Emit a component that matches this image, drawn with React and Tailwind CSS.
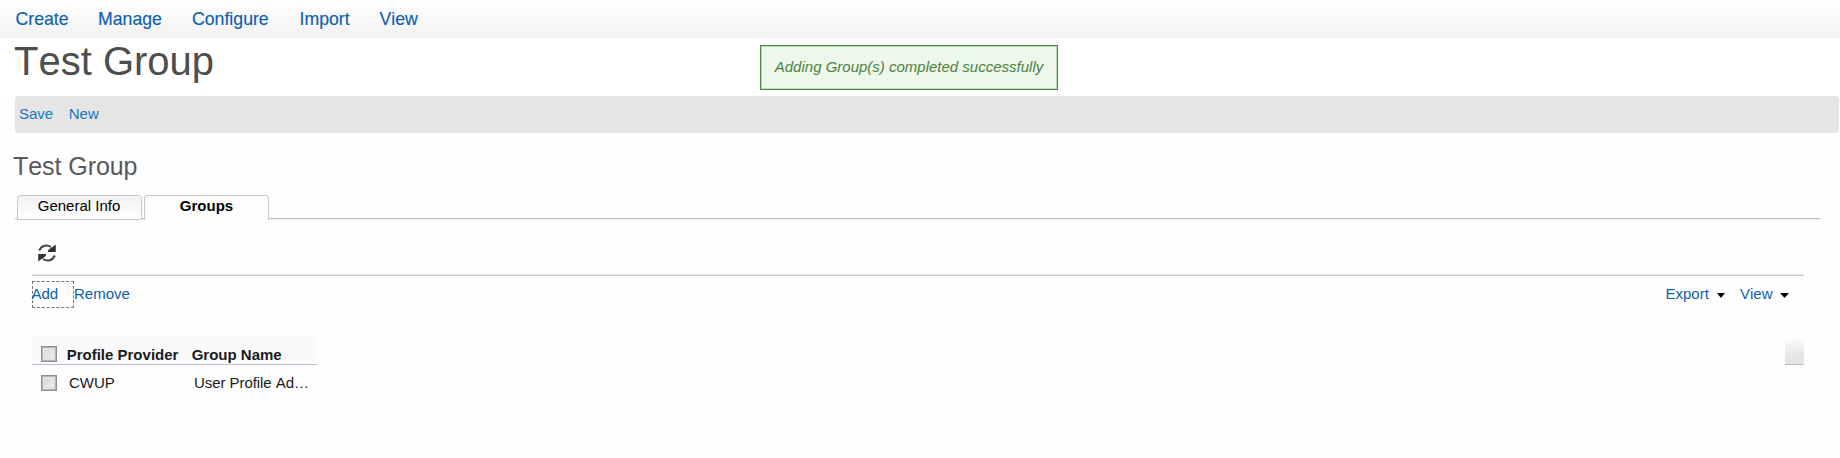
const NAV = [
  ['Create', 'w-[82.5px]'],
  ['Manage', 'w-[94px]'],
  ['Configure', 'w-[107.5px]'],
  ['Import', 'w-[80px]'],
  ['View', 'w-[60px]'],
];

function Checkbox() {
  return (
    <span
      role="checkbox"
      aria-checked="false"
      className="block size-4 shrink-0 border border-[#8e8f8f] bg-linear-to-br from-[#c9cdd6] to-[#fafafa] shadow-[inset_0_0_0_1px_#b4b5b5,inset_0_0_0_3px_#e2e3e4]"
    />
  );
}

function Refresh() {
  return (
    <svg className="block h-[18px] w-[18px]" viewBox="0 0 18 18" fill="none">
      <path d="M1.2 6.5C3.5 1.2 9 .2 13 3" stroke="#444" strokeWidth="2" />
      <path d="M17.8 .5V8H10V6.4L12 4.4L15.2 2.6Z" fill="#333" />
      <path d="M16.8 11.5C14.5 16.8 9 17.8 5 15" stroke="#444" strokeWidth="2" />
      <path d="M.2 17.5V10H8V11.6L6 13.6L2.8 15.4Z" fill="#333" />
    </svg>
  );
}

function Caret({ className }) {
  return (
    <svg className={`block h-[5px] ${className}`} viewBox="0 0 9 5" preserveAspectRatio="none">
      <path d="M0 0H9L4.5 5Z" fill="#000" />
    </svg>
  );
}

export default function App() {
  return (
    <div className="relative h-[458px] w-[1840px] overflow-hidden bg-[#fefefe] font-['Liberation_Sans',Arial,sans-serif] text-[15px] whitespace-nowrap text-[#0b5fb0] [font-kerning:none]">
      <nav className="flex h-[38px] bg-linear-to-b from-white to-[#f2f2f2] pl-[15.5px] text-[17.7px] leading-[38px] [-webkit-text-stroke:0.15px_#0b5fb0]">
        {NAV.map(([label, width]) => (
          <a key={label} className={width}>{label}</a>
        ))}
      </nav>

      <h1 className="h-[58px] bg-white pl-[14px] text-[40px] leading-[46px] text-[#4d4d4d]">Test Group</h1>
      <div className="absolute top-[45px] left-[760px] flex h-[45px] w-[298px] items-center justify-center border border-[#46873f] bg-[#edf7ea] text-[15px] text-[#4a8240] italic shadow-[inset_0_0_0_1px_#bfdcb9]">
        Adding Group(s) completed successfully
      </div>

      <div className="ml-[15px] flex h-[37px] w-[1824px] gap-[15.5px] rounded-[4px] bg-[#e5e5e5] pl-1 leading-[36px] text-[#1878c0]">
        <a>Save</a>
        <a>New</a>
      </div>

      <h2 className="h-[62px] pt-[16px] pl-[13px] text-[25px] leading-[34px] tracking-[-0.06px] text-[#58595b]">Test Group</h2>

      <div className="ml-[15px] flex h-[25px] w-[1805px] items-stretch text-black">
        <div className="mb-[1px] w-[2px] border-b border-[#c2c2c2]" />
        <div className="w-[125px] rounded-t-[3px] border border-[#c8c8c8] bg-linear-to-b from-[#f1f1f1] to-white pr-px text-center leading-[20px]">
          General Info
        </div>
        <div className="mb-[1px] w-[2px] border-b border-[#c2c2c2]" />
        <div className="w-[125px] rounded-t-[3px] border border-b-0 border-[#c8c8c8] text-center leading-[20px] font-bold">
          Groups
        </div>
        <div className="mb-[1px] flex-1 border-b border-[#c2c2c2] shadow-[0_1px_0_#ececec]" />
      </div>

      <section className="mr-[36px] ml-[32px]">
        <div className="h-[56px] border-b border-[#c9c9c9] pt-[24px] pl-[6px] shadow-[inset_0_-1px_0_#e6e6e6]">
          <Refresh />
        </div>
        <div className="flex h-[60px] items-start pt-[5px]">
          <a className="h-[27px] w-[42px] border border-dashed border-[#777] leading-[24px]">
            <span className="-ml-[1.5px]">Add</span>
          </a>
          <a className="leading-[25px]">Remove</a>
          <div className="ml-auto flex h-[27px] items-start pr-[15px] leading-[25px]">
            <a className="w-[52px] pl-[0.5px]">Export</a>
            <Caret className="mt-3 w-[8px]" />
            <a className="ml-[15px] w-[40px]">View</a>
            <Caret className="mt-3 w-[9px]" />
          </div>
        </div>
        <div className="flex justify-between text-[#1a1a1a]">
          <div className="w-[285px]">
            <div className="flex h-[29px] border-b border-[#b4c0cf] bg-[#fafafa] pt-[10px] pl-[9px] font-bold">
              <Checkbox />
              <span className="ml-[9.7px] w-[125px] leading-[17px]">Profile Provider</span>
              <span className="leading-[17px]">Group Name</span>
            </div>
            <div className="flex pt-[10px] pl-[9px]">
              <Checkbox />
              <span className="ml-[12px] w-[125px] leading-[16px]">CWUP</span>
              <span className="leading-[16px] tracking-[-0.06px]">User Profile Ad…</span>
            </div>
          </div>
          <div className="h-[29px] w-[19px] border-b border-[#b4c0cf] bg-linear-to-b from-white via-[#e6e6e6] via-70% to-[#e4e4e4]" />
        </div>
      </section>
    </div>
  );
}
